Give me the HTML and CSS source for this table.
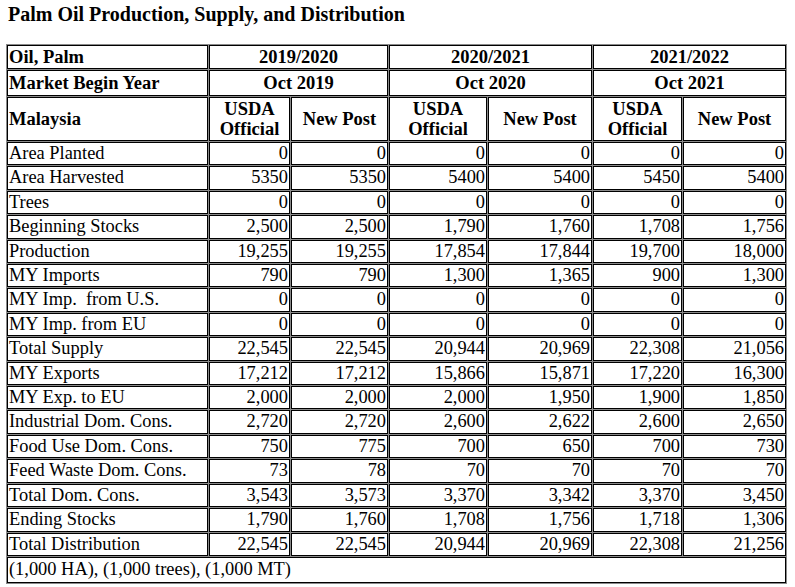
FILE: index.html
```html
<!DOCTYPE html>
<html>
<head>
<meta charset="utf-8">
<link rel="stylesheet" href="styles.css">
</head>
<body>
<div class="title">Palm Oil Production, Supply, and Distribution</div>
<table class="psd">
<colgroup>
<col class="c-label"><col class="c2"><col class="c3"><col class="c4"><col class="c5"><col class="c6"><col class="c7">
</colgroup>
<tr class="h1"><th class="lbl">Oil, Palm</th><th colspan="2">2019/2020</th><th colspan="2">2020/2021</th><th colspan="2">2021/2022</th></tr>
<tr class="h2"><th class="lbl">Market Begin Year</th><th colspan="2">Oct 2019</th><th colspan="2">Oct 2020</th><th colspan="2">Oct 2021</th></tr>
<tr class="h3"><th class="lbl">Malaysia</th><th>USDA<br>Official</th><th>New Post</th><th>USDA<br>Official</th><th>New Post</th><th>USDA<br>Official</th><th>New Post</th></tr>
<tr><td class="lbl">Area Planted</td><td>0</td><td>0</td><td>0</td><td>0</td><td>0</td><td>0</td></tr>
<tr><td class="lbl">Area Harvested</td><td>5350</td><td>5350</td><td>5400</td><td>5400</td><td>5450</td><td>5400</td></tr>
<tr><td class="lbl">Trees</td><td>0</td><td>0</td><td>0</td><td>0</td><td>0</td><td>0</td></tr>
<tr><td class="lbl">Beginning Stocks</td><td>2,500</td><td>2,500</td><td>1,790</td><td>1,760</td><td>1,708</td><td>1,756</td></tr>
<tr><td class="lbl">Production</td><td>19,255</td><td>19,255</td><td>17,854</td><td>17,844</td><td>19,700</td><td>18,000</td></tr>
<tr><td class="lbl">MY Imports</td><td>790</td><td>790</td><td>1,300</td><td>1,365</td><td>900</td><td>1,300</td></tr>
<tr><td class="lbl">MY Imp.&nbsp; from U.S.</td><td>0</td><td>0</td><td>0</td><td>0</td><td>0</td><td>0</td></tr>
<tr><td class="lbl">MY Imp. from EU</td><td>0</td><td>0</td><td>0</td><td>0</td><td>0</td><td>0</td></tr>
<tr><td class="lbl">Total Supply</td><td>22,545</td><td>22,545</td><td>20,944</td><td>20,969</td><td>22,308</td><td>21,056</td></tr>
<tr><td class="lbl">MY Exports</td><td>17,212</td><td>17,212</td><td>15,866</td><td>15,871</td><td>17,220</td><td>16,300</td></tr>
<tr><td class="lbl">MY Exp. to EU</td><td>2,000</td><td>2,000</td><td>2,000</td><td>1,950</td><td>1,900</td><td>1,850</td></tr>
<tr><td class="lbl">Industrial Dom. Cons.</td><td>2,720</td><td>2,720</td><td>2,600</td><td>2,622</td><td>2,600</td><td>2,650</td></tr>
<tr><td class="lbl">Food Use Dom. Cons.</td><td>750</td><td>775</td><td>700</td><td>650</td><td>700</td><td>730</td></tr>
<tr><td class="lbl">Feed Waste Dom. Cons.</td><td>73</td><td>78</td><td>70</td><td>70</td><td>70</td><td>70</td></tr>
<tr><td class="lbl">Total Dom. Cons.</td><td>3,543</td><td>3,573</td><td>3,370</td><td>3,342</td><td>3,370</td><td>3,450</td></tr>
<tr><td class="lbl">Ending Stocks</td><td>1,790</td><td>1,760</td><td>1,708</td><td>1,756</td><td>1,718</td><td>1,306</td></tr>
<tr><td class="lbl">Total Distribution</td><td>22,545</td><td>22,545</td><td>20,944</td><td>20,969</td><td>22,308</td><td>21,256</td></tr>
<tr class="foot"><td class="lbl" colspan="7">(1,000 HA), (1,000 trees), (1,000 MT)</td></tr>
</table>
</body>
</html>
```

FILE: styles.css
```css
html, body {
  margin: 0;
  padding: 0;
  background: #fff;
}
body {
  padding: 4px 6px 0 6px;
  font-family: "Liberation Serif", "Times New Roman", serif;
  color: #000;
}
.title {
  font-weight: bold;
  font-size: 20px;
  line-height: 21px;
  margin: 0 0 19px 2px;
}
.psd {
  table-layout: fixed;
  width: 781px;
  border-collapse: separate;
  border-spacing: 1px;
  background: #8a8a8a;
  font-size: 18.4px;
}
.c-label { width: 201px; }
.c2 { width: 81px; }
.c3 { width: 97px; }
.c4 { width: 98px; }
.c5 { width: 104px; }
.c6 { width: 89px; }
.c7 { width: 103px; }
.psd th, .psd td {
  background: #fff;
  border: 1px solid #000;
  padding: 0 1px;
  line-height: 21.4px;
  white-space: nowrap;
  overflow: hidden;
}
.psd th {
  font-weight: bold;
  font-size: 18.5px;
  text-align: center;
  line-height: 20.5px;
}
.psd td {
  text-align: right;
}
.psd .lbl {
  text-align: left;
  padding-left: 1px;
}
.h1 th { height: 22px; }
.h2 th { height: 24px; }
.h3 th { height: 42px; }
.foot td { height: 24px; }
```
